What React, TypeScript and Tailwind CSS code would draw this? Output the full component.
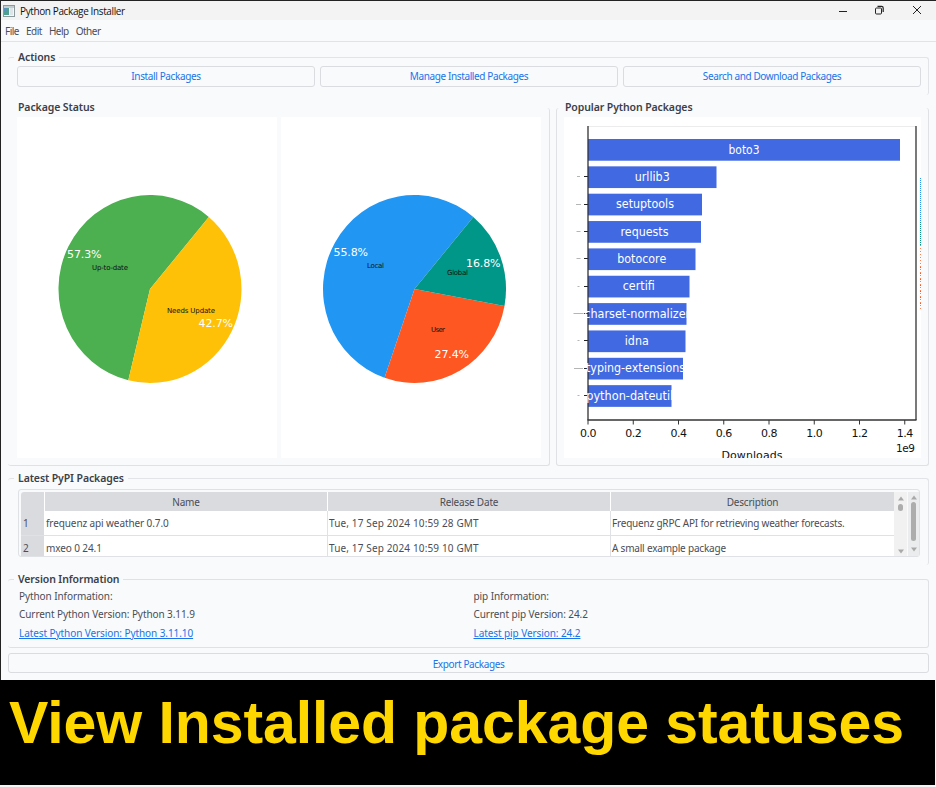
import React, { FC, ReactNode } from "react";

type Slice = { name: string; value: number; color: string; labelX: number; labelY: number; labelW: number; pctX: number; pctY: number };

const status: Slice[] = [
  { name: "Up-to-date", value: 57.3, color: "#4caf50", labelX: 92, labelY: 152.5, labelW: 36, pctX: 67, pctY: 141 },
  { name: "Needs Update", value: 42.7, color: "#ffc107", labelX: 167, labelY: 195.5, labelW: 48, pctX: 198.5, pctY: 209.5 },
];

const locations: Slice[] = [
  { name: "Local", value: 55.8, color: "#2196f3", labelX: 87, labelY: 151, labelW: 17, pctX: 53.5, pctY: 138.5 },
  { name: "User", value: 27.4, color: "#ff5722", labelX: 151, labelY: 214.5, labelW: 14, pctX: 154.5, pctY: 240.5 },
  { name: "Global", value: 16.8, color: "#009688", labelX: 167, labelY: 157.5, labelW: 21, pctX: 186, pctY: 149.5 },
];

const downloads = [
  { name: "boto3", width: 312, textW: 31, tick: 0 },
  { name: "urllib3", width: 128.5, textW: 35, tick: 3 },
  { name: "setuptools", width: 114, textW: 58, tick: 5 },
  { name: "requests", width: 113, textW: 48, tick: 4 },
  { name: "botocore", width: 107.5, textW: 49, tick: 4 },
  { name: "certifi", width: 101.5, textW: 32, tick: 2 },
  { name: "charset-normalizer", width: 98.5, textW: 106, tick: 10 },
  { name: "idna", width: 97.5, textW: 24, tick: 2 },
  { name: "typing-extensions", width: 95, textW: 99, tick: 9 },
  { name: "python-dateutil", width: 83.5, textW: 87, tick: 2 },
];

const rows = [
  ["frequenz api weather 0.7.0", "Tue, 17 Sep 2024 10:59 28 GMT", "Frequenz gRPC API for retrieving weather forecasts."],
  ["mxeo 0 24.1", "Tue, 17 Sep 2024 10:59 10 GMT", "A small example package"],
];

const Group: FC<{ title: string; className: string; children: ReactNode }> = ({ title, className, children }) => (
  <section className={`relative rounded-[3px] ${className}`}>
    <h2 className="absolute -top-[9px] left-1.5 bg-[#f8fafc] pr-1 pl-1 text-[10.5px] leading-4 font-semibold tracking-[-0.1px] whitespace-nowrap text-[#3c4048]">
      {title}
    </h2>
    {children}
  </section>
);

const Button: FC<{ children: ReactNode }> = ({ children }) => (
  <button className="flex h-full flex-1 items-center justify-center rounded-[3px] border border-[#dadce0] text-[10px] tracking-[-0.38px] whitespace-nowrap text-[#1a73e8]">
    {children}
  </button>
);

const Pie: FC<{ slices: Slice[]; cx: number; left: number }> = ({ slices, cx, left }) => {
  const cy = 172;
  const rx = 91.5;
  const ry = 94;
  let angle = 50;
  const paths = slices.map((s) => {
    const a = (angle * Math.PI) / 180;
    angle += s.value * 3.6;
    const b = (angle * Math.PI) / 180;
    const large = s.value > 50 ? 1 : 0;
    return `M${cx} ${cy} L${cx + rx * Math.cos(a)} ${cy - ry * Math.sin(a)} A${rx} ${ry} 0 ${large} 0 ${cx + rx * Math.cos(b)} ${cy - ry * Math.sin(b)} Z`;
  });
  return (
    <svg width="260" height="341" viewBox={`${left} 0 260 341`} className="shrink-0 bg-white font-['DejaVu_Sans',sans-serif]">
      {slices.map((s, i) => (
        <path key={s.name} d={paths[i]} fill={s.color} />
      ))}
      {slices.map((s) => (
        <g key={s.name}>
          <text x={s.labelX} y={s.labelY} fontSize="7" textLength={s.labelW} fill="#111">
            {s.name}
          </text>
          <text x={s.pctX} y={s.pctY} fontSize="11" textLength="34.5" fill="#fff">
            {s.value}%
          </text>
        </g>
      ))}
    </svg>
  );
};

const BarChart: FC = () => (
  <svg width="357" height="341" viewBox="0 0 357 341" className="shrink-0 bg-white font-['DejaVu_Sans',sans-serif]">
    <path d="M24 9.5H352" stroke="#ececec" />
    {downloads.map((d, i) => {
      const y = 22 + i * 27.35;
      return (
        <g key={d.name}>
          <rect x="24" y={y} width={d.width} height="21.7" fill="#4169e1" />
          {i > 0 && <path d={`M20 ${Math.round(y + 10) + 0.5}h4`} stroke="#222" />}
          {d.tick > 0 && <path d={`M${14.5 - d.tick / 2} ${Math.round(y + 10) + 0.5}h${d.tick}`} stroke="#b5b5b5" />}
        </g>
      );
    })}
    <path d="M24 9V303M352 9V303" stroke="#333" strokeWidth="1.3" />
    <path d="M23.5 303H352.5" stroke="#333" strokeWidth="1.3" />
    {downloads.map((d, i) => (
      <text key={d.name} x={24 + d.width / 2 - d.textW / 2} y={36.5 + i * 27.35} fontSize="11.5" textLength={d.textW} lengthAdjust="spacingAndGlyphs" fill="#fff">
        {d.name}
      </text>
    ))}
    {["0.0", "0.2", "0.4", "0.6", "0.8", "1.0", "1.2", "1.4"].map((t, i) => (
      <g key={t}>
        <path d={`M${24 + i * 45.25} 303v4.5`} stroke="#333" />
        <text x={24.3 + i * 45.25} y="319.5" fontSize="11" textAnchor="middle" textLength="16.5" fill="#111">
          {t}
        </text>
      </g>
    ))}
    <text x="332" y="335" fontSize="10.5" textLength="19" fill="#111">
      1e9
    </text>
    <text x="157.5" y="342.3" fontSize="11" textLength="61" fill="#111">
      Downloads
    </text>
    <path d="M356.5 61V105" stroke="#2196f3" strokeDasharray="1 1" />
    <path d="M356.5 105V128" stroke="#009688" strokeDasharray="1 1" />
    <path d="M356.5 128V194" stroke="#ff7f50" strokeDasharray="1 2" />
    <path d="M356.5 150V190" stroke="#2196f3" strokeDasharray="1 5" />
  </svg>
);

const Arrow: FC<{ down?: boolean }> = ({ down }) => (
  <svg width="6" height="5" viewBox="0 0 6 5" className="shrink-0">
    <path d={down ? "M0 0.5h6L3 4.5z" : "M0 4.5h6L3 0.5z"} fill="#a9a9a9" />
  </svg>
);

const App: FC = () => (
  <div className="h-[787px] w-[936px] overflow-hidden bg-[#f4f4f4] font-['Noto_Sans',sans-serif] text-[#4a4d55]">
    <div className="flex h-[680px] flex-col border-t border-l border-[#222] bg-[#f8fafc]">
      <header className="flex h-[19px] shrink-0 items-center bg-[#f3f3f3] pl-[2px] font-['Open_Sans',sans-serif]">
        <svg width="12" height="12" viewBox="0 0 12 12">
          <rect x="0.5" y="0.5" width="11" height="11" fill="#f5f7f7" stroke="#8d989b" />
          <rect x="1" y="1" width="10" height="2" fill="#c3cccf" />
          <rect x="1" y="3" width="5" height="7" fill="#4f9f91" />
          <rect x="1" y="3" width="2.5" height="4" fill="#5b8fc0" />
          <rect x="7" y="3" width="3" height="7" fill="#dfe4e8" />
        </svg>
        <h1 className="ml-[5px] text-[10px] leading-4 tracking-[-0.38px] whitespace-nowrap text-[#111]">Python Package Installer</h1>
        <svg width="84" height="12" viewBox="0 0 84 12" fill="none" stroke="#222" className="relative -top-px mr-[14px] ml-auto">
          <path d="M1 7.5h8" />
          <rect x="37.5" y="4" width="6" height="6" rx="1" />
          <path d="M39.5 2.3h4q1.7 0 1.7 1.7v4" strokeWidth="1.2" />
          <path d="M75 2l8 8M83 2l-8 8" />
        </svg>
      </header>
      <nav className="flex h-[22px] shrink-0 items-center gap-[7px] border-b border-[#e1e3e6] pt-[2px] pl-1 text-[10px] tracking-[-0.5px] whitespace-nowrap">
        <span>File</span>
        <span>Edit</span>
        <span>Help</span>
        <span>Other</span>
      </nav>

      <main className="flex flex-col pt-[15px] pr-[7px] pl-[7px]">
        <Group title="Actions" className="h-[38px] border-t border-r border-[#e2e4e7]">
          <div className="flex h-[29px] gap-[5px] pt-[8px] pr-[7px] pl-[9px]">
            <Button>Install Packages</Button>
            <Button>Manage Installed Packages</Button>
            <Button>Search and Download Packages</Button>
          </div>
        </Group>

        <div className="mt-[13px] flex h-[358px] gap-[6px]">
          <Group title="Package Status" className="w-[542px] border-r border-b border-[#dfe1e4]">
            <div className="flex gap-1 pt-[9px] pl-[9px]">
              <Pie slices={status} cx={150} left={17} />
              <Pie slices={locations} cx={134.5} left={1} />
            </div>
          </Group>
          <Group title="Popular Python Packages" className="flex-1 border-r border-b border-l border-[#dfe1e4] [&>h2]:left-1">
            <div className="pt-[9px] pl-[7px]">
              <BarChart />
            </div>
          </Group>
        </div>

        <Group title="Latest PyPI Packages" className="mt-[12px] h-[87px] border-t border-r border-[#e2e4e7]">
          <div className="pt-[10px] pr-[8px] pl-[10px]">
            <div className="flex h-[68px] rounded-[3px] border border-[#dfe1e4] pt-[2px] pl-[2px] text-[10px] whitespace-nowrap">
              <div className="flex flex-1 flex-col overflow-hidden rounded-tl-[3px] bg-white">
                <div className="grid h-[19px] shrink-0 grid-cols-[24px_283px_283px_1fr] items-center bg-[#dadbdf] text-center leading-[21px] tracking-[-0.2px]">
                  <span className="h-[19px] border-r border-white" />
                  <span className="h-[19px] border-r border-white">Name</span>
                  <span className="h-[19px] border-r border-white">Release Date</span>
                  <span className="h-[19px]">Description</span>
                </div>
                {rows.map((row, i) => (
                  <div key={i} className="grid h-[25px] shrink-0 grid-cols-[24px_283px_283px_1fr] border-b border-[#dfe1e4] leading-6">
                    <span className="border-r border-white bg-[#dadbdf] pl-[2px]">{i + 1}</span>
                    <span className="border-r border-[#dfe1e4] pl-[1px] tracking-[-0.1px]">{row[0]}</span>
                    <span className="border-r border-[#dfe1e4] pl-[1px] tracking-[0.14px]">{row[1]}</span>
                    <span className="pl-[1px] tracking-[-0.2px]">{row[2]}</span>
                  </div>
                ))}
              </div>
              <div className="flex w-[13px] flex-col items-center bg-[#f1f1f2] pt-[4px] pb-[2px]">
                <Arrow />
                <i className="mt-[3px] h-[7px] w-[5px] rounded-full bg-[#adadad]" />
                <span className="mt-auto flex">
                  <Arrow down />
                </span>
              </div>
              <div className="ml-[1px] flex w-[11px] flex-col items-center bg-[#ebecee] pt-[3px] pb-[4px]">
                <Arrow />
                <i className="mt-[2px] h-[39px] w-[5px] rounded-full bg-[#adadad]" />
                <span className="mt-auto flex">
                  <Arrow down />
                </span>
              </div>
            </div>
          </div>
        </Group>

        <Group title="Version Information" className="mt-[14px] h-[69px] border-t border-r border-b border-[#dfe1e4]">
          <div className="grid grid-cols-2 pt-[7px] pl-[11px] text-[10px] leading-[18.3px] tracking-[-0.08px] whitespace-nowrap">
            <div>
              <p>Python Information:</p>
              <p>Current Python Version: Python 3.11.9</p>
              <a className="text-[#1a73e8] underline">Latest Python Version: Python 3.11.10</a>
            </div>
            <div>
              <p>pip Information:</p>
              <p>Current pip Version: 24.2</p>
              <a className="text-[#1a73e8] underline">Latest pip Version: 24.2</a>
            </div>
          </div>
        </Group>

        <div className="mt-[5px] flex h-[20px] [&>button]:pt-[2px]">
          <Button>Export Packages</Button>
        </div>
      </main>
    </div>
    <div className="h-[105px] w-[935px] bg-black pl-[9px] font-['Liberation_Sans',sans-serif] text-[59px] leading-[86px] font-bold tracking-[-0.08px] whitespace-nowrap text-[#ffd700]">
      View Installed package statuses
    </div>
  </div>
);

export default App;
